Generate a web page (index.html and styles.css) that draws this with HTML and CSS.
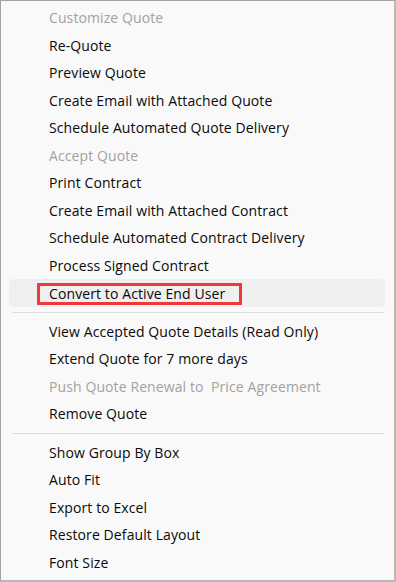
FILE: index.html
```html
<!DOCTYPE html>
<html lang="en">
<head>
  <meta charset="UTF-8">
  <meta name="viewport" content="width=device-width, initial-scale=1.0">
  <title>Quote Menu</title>
  <link rel="stylesheet" href="styles.css">
</head>
<body>
  <div class="menu">
    <div class="group">
      <div class="item disabled">Customize Quote</div>
      <div class="item">Re-Quote</div>
      <div class="item">Preview Quote</div>
      <div class="item">Create Email with Attached Quote</div>
      <div class="item">Schedule Automated Quote Delivery</div>
      <div class="item disabled">Accept Quote</div>
      <div class="item">Print Contract</div>
      <div class="item">Create Email with Attached Contract</div>
      <div class="item">Schedule Automated Contract Delivery</div>
      <div class="item">Process Signed Contract</div>
      <div class="item hover"><span class="callout">Convert to Active End User</span></div>
    </div>
    <div class="sep"></div>
    <div class="group">
      <div class="item">View Accepted Quote Details (Read Only)</div>
      <div class="item">Extend Quote for 7 more days</div>
      <div class="item disabled">Push Quote Renewal to &nbsp;Price Agreement</div>
      <div class="item">Remove Quote</div>
    </div>
    <div class="sep"></div>
    <div class="group">
      <div class="item">Show Group By Box</div>
      <div class="item">Auto Fit</div>
      <div class="item">Export to Excel</div>
      <div class="item">Restore Default Layout</div>
      <div class="item">Font Size</div>
    </div>
  </div>
</body>
</html>
```
FILE: styles.css
```css
html, body {
  margin: 0;
  padding: 0;
}
body {
  font-family: "Open Sans", Arial, sans-serif;
  font-size: 14px;
  color: #0a0a0a;
  background: #ffffff;
}
.menu {
  box-sizing: border-box;
  width: 396px;
  height: 582px;
  background: #f9f9f9;
  border: 1px solid #a3a3a3;
  border-right: 2px solid #b9b9b9;
  border-bottom: 2px solid #b9b9b9;
  padding: 3px 8px 0 8px;
}
.item {
  height: 27.5px;
  line-height: 27.5px;
  padding-left: 40px;
  border-radius: 5px;
  white-space: nowrap;
  letter-spacing: 0.1px;
}
.item.disabled {
  color: #a2a2a2;
}
.item.hover {
  background: #efefef;
  margin-right: 1px;
}
.callout {
  display: inline-block;
  box-sizing: border-box;
  height: 22px;
  line-height: 16px;
  margin-top: 4px;
  margin-left: -12px;
  padding: 0 14px 0 9px;
  border: 3px solid #f0383c;
  vertical-align: top;
}
.sep {
  height: 1px;
  background: #dcdcdc;
  margin: 5px 2px 5px 3px;
}
```
